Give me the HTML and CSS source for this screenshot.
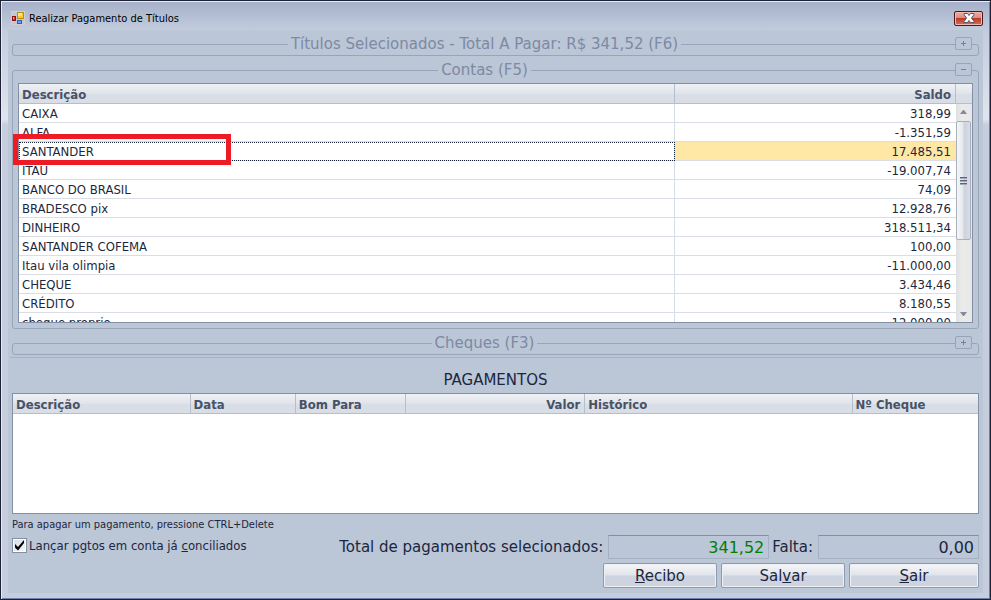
FILE: index.html
```html
<!DOCTYPE html>
<html lang="pt-BR">
<head>
    <meta charset="UTF-8">
    <meta name="viewport" content="width=device-width, initial-scale=1.0">
    <title>Realizar Pagamento de Títulos</title>
    <link rel="stylesheet" href="styles.css">
</head>
<body>
    <div class="window">
        <header class="title-bar">
            <svg class="app-icon" width="14" height="14" viewBox="0 0 14 14" aria-hidden="true">
                <rect x=".5" y=".5" width="13" height="13" fill="#c3c9d2" stroke="#cfd0cf"/>
                <rect x="6.5" y="1.5" width="6" height="6" fill="#ffc926" stroke="#c08a12"/>
                <rect x="7" y="2" width="4" height="3" fill="#ffe588"/>
                <rect x="1.5" y="5.5" width="3" height="4" fill="#d93a2b" stroke="#8c1209"/>
                <rect x="2" y="6" width="1" height="2" fill="#ff9c8c"/>
                <rect x="6.5" y="9.5" width="4" height="3" fill="#6f9df5" stroke="#2c5fc4"/>
            </svg>
            <h1>Realizar Pagamento de Títulos</h1>
            <button class="close" aria-label="Fechar">
                <svg width="12" height="10" viewBox="0 0 12 10">
                    <path d="M1 .5H4.5L6 2.5L7.5 .5H11V1.5L8.5 5L11 8.5V9.5H7.5L6 7.5L4.5 9.5H1V8.5L3.5 5L1 1.5Z" fill="#fff" stroke="#535666"/>
                </svg>
            </button>
        </header>

        <main class="client">
            <fieldset class="group">
                <legend>Títulos Selecionados - Total A Pagar: R$ 341,52 (F6)</legend>
                <button class="expander" aria-label="Expandir títulos"><svg width="5" height="5" viewBox="0 0 5 5"><path d="M0 2H5V3H0ZM2 0H3V5H2Z"/></svg></button>
            </fieldset>

            <fieldset class="group group-open">
                <legend>Contas (F5)</legend>
                <button class="expander" aria-label="Recolher contas"><svg width="5" height="5" viewBox="0 0 5 5"><path d="M0 2H5V3H0Z"/></svg></button>
                <div class="accounts-wrap">
                    <div class="accounts">
                        <table>
                            <colgroup><col class="col-account"><col></colgroup>
                            <thead>
                                <tr><th>Descrição</th><th class="num">Saldo</th></tr>
                            </thead>
                            <tbody>
                                <tr><td>CAIXA</td><td class="num">318,99</td></tr>
                                <tr><td>ALFA</td><td class="num">-1.351,59</td></tr>
                                <tr class="selected"><td>SANTANDER</td><td class="num">17.485,51</td></tr>
                                <tr><td>ITAU</td><td class="num">-19.007,74</td></tr>
                                <tr><td>BANCO DO BRASIL</td><td class="num">74,09</td></tr>
                                <tr><td>BRADESCO pix</td><td class="num">12.928,76</td></tr>
                                <tr><td>DINHEIRO</td><td class="num">318.511,34</td></tr>
                                <tr><td>SANTANDER COFEMA</td><td class="num">100,00</td></tr>
                                <tr><td>Itau vila olimpia</td><td class="num">-11.000,00</td></tr>
                                <tr><td>CHEQUE</td><td class="num">3.434,46</td></tr>
                                <tr><td>CRÉDITO</td><td class="num">8.180,55</td></tr>
                                <tr><td>cheque proprio</td><td class="num">12.000,00</td></tr>
                            </tbody>
                        </table>
                        <div class="scroll">
                            <div class="scroll-head"></div>
                            <div class="scroll-track">
                                <svg class="arrow" width="7" height="4" viewBox="0 0 7 4"><path d="M0 4L3 0H4L7 4Z"/></svg>
                                <div class="scroll-thumb"><i></i><i></i><i></i></div>
                                <svg class="arrow arrow-down" width="7" height="4" viewBox="0 0 7 4"><path d="M0 0H7L4 4H3Z"/></svg>
                            </div>
                        </div>
                    </div>
                    <div class="highlight"></div>
                </div>
            </fieldset>

            <fieldset class="group">
                <legend>Cheques (F3)</legend>
                <button class="expander" aria-label="Expandir cheques"><svg width="5" height="5" viewBox="0 0 5 5"><path d="M0 2H5V3H0ZM2 0H3V5H2Z"/></svg></button>
            </fieldset>

            <section class="payments">
                <h2>PAGAMENTOS</h2>
                <div class="payments-list">
                    <table>
                        <colgroup>
                            <col class="col-desc"><col class="col-date"><col class="col-due"><col class="col-value"><col class="col-history"><col>
                        </colgroup>
                        <thead>
                            <tr>
                                <th>Descrição</th>
                                <th>Data</th>
                                <th>Bom Para</th>
                                <th class="num">Valor</th>
                                <th>Histórico</th>
                                <th>Nº Cheque</th>
                            </tr>
                        </thead>
                    </table>
                </div>
                <p class="hint">Para apagar um pagamento, pressione CTRL+Delete</p>
            </section>

            <div class="totals">
                <label class="check">
                    <input type="checkbox" checked>
                    <svg width="15" height="15" viewBox="0 0 15 15"><path d="M3 6L6 9L12 2V5L6 12.500L3 9.500Z"/></svg>
                    <span>Lançar pgtos em conta já <u>c</u>onciliados</span>
                </label>
                <label class="total-label" for="total">Total de pagamentos selecionados:</label>
                <input class="total-field paid" id="total" type="text" value="341,52" readonly>
                <label class="total-label left-label" for="falta">Falta:</label>
                <input class="total-field" id="falta" type="text" value="0,00" readonly>
            </div>

            <div class="actions">
                <button class="btn"><u>R</u>ecibo</button>
                <button class="btn btn-save">Sal<u>v</u>ar</button>
                <button class="btn btn-exit"><u>S</u>air</button>
            </div>
        </main>
    </div>
</body>
</html>
```
FILE: styles.css
```css
* {
    box-sizing: border-box;
}

body {
    margin: 0;
    font-family: "DejaVu Sans Condensed", "DejaVu Sans", Tahoma, sans-serif;
    font-size: 13px;
    color: #1b2740;
}

h1, h2, p {
    margin: 0;
    font-weight: normal;
}

button, input {
    font: inherit;
    color: inherit;
}

.window {
    min-height: 100vh;
    display: flex;
    flex-direction: column;
    padding: 1px 6px 6px;
    border: 1px solid #1d2236;
    background: linear-gradient(#a5b0c9, #c3cddd 30px, #e0e4ee 118px, #c6cddc 124px);
    box-shadow: inset 1px 1px 0 #e6eaf2, inset -1px -1px 0 #6683b0;
}

.title-bar {
    height: 28px;
    display: flex;
    align-items: center;
    gap: 4px;
    padding: 4px 1px 0 4px;
}

.title-bar h1 {
    flex: 1;
    font-size: 11px;
    color: #000;
}

.close {
    width: 29px;
    height: 15px;
    display: flex;
    align-items: center;
    justify-content: center;
    padding: 0;
    border: 1px solid #4a1a22;
    border-radius: 2px;
    background: linear-gradient(#eeb0a5, #dd8a7d 45%, #b93d2a 50%, #d0715f);
    box-shadow: inset 0 0 0 1px #f0b8ae;
}

.client {
    flex: 1;
    display: flex;
    flex-direction: column;
    margin: 0 1px;
    padding: 5px 4px;
    background: #bbc6d7;
}

/* right padding keeps the legend clear of the expander */
.group {
    position: relative;
    min-width: 0;
    height: 21px;
    margin: 0 0 5px;
    padding: 0 27px 0 5px;
    border: 1px solid #98a4b7;
    border-radius: 3px;
}

.group-open {
    height: auto;
    padding-top: 4px;
    padding-bottom: 5px;
}

.group legend {
    height: 18px;
    margin: 0 auto;
    padding: 0 3px;
    font-family: "DejaVu Sans", Verdana, sans-serif;
    font-size: 15px;
    line-height: 18px;
    color: #7d8aa3;
}

.expander {
    position: absolute;
    top: -16px;
    right: 6px;
    width: 17px;
    height: 13px;
    display: flex;
    align-items: center;
    justify-content: center;
    padding: 0;
    border: 1px solid #98a4b7;
    border-radius: 2px;
    background: #bbc6d7;
}

.expander svg {
    fill: #74819a;
}

table {
    width: 100%;
    table-layout: fixed;
    border-collapse: separate;
    border-spacing: 0;
}

th {
    height: 20px;
    padding: 2px 4px 0 3px;
    border-right: 1px solid #b4bfce;
    border-bottom: 1px solid #b4bfce;
    background: linear-gradient(#eef1f4, #e0e4ea 50%, #d9dde6 52%);
    text-align: left;
    line-height: 17px;
    color: #475267;
}

td {
    height: 19px;
    padding: 2px 5px 0 3px;
    border-bottom: 1px solid #d9dde8;
    line-height: 16px;
}

.num {
    text-align: right;
}

.accounts-wrap {
    position: relative;
    margin-right: -22px;
}

.accounts {
    height: 240px;
    display: flex;
    align-items: flex-start;
    overflow: hidden;
    border: 1px solid #8390a4;
    background: #fff;
}

.accounts table {
    flex: 1;
}

.accounts td:first-child {
    border-right: 1px solid #d5dbe6;
}

.col-account {
    width: 70%;
}

.selected .num {
    background: #ffe8a6;
}

.selected td:first-child {
    outline: 1px dotted #1b2740;
    outline-offset: -1px;
}

.highlight {
    position: absolute;
    top: 51px;
    left: -5px;
    width: 218px;
    height: 31px;
    border: 5px solid #ed1c24;
}

.scroll {
    width: 16px;
    align-self: stretch;
    display: flex;
    flex-direction: column;
}

.scroll-head {
    height: 20px;
    border-bottom: 1px solid #b4bfce;
    background: linear-gradient(#eef1f4, #e0e4ea 50%, #d9dde6 52%);
}

.scroll-track {
    flex: 1;
    display: flex;
    flex-direction: column;
    align-items: center;
    padding: 6px 1px 6px 0;
    background: linear-gradient(90deg, #dfe0e1, #ebebec 40%, #e6e7e8);
}

.arrow {
    flex: none;
    fill: #85899a;
}

.arrow-down {
    margin-top: auto;
}

.scroll-thumb {
    width: 15px;
    height: 119px;
    display: flex;
    flex-direction: column;
    align-items: center;
    justify-content: center;
    gap: 1px;
    margin-top: 7px;
    border: 1px solid #a9afb9;
    border-radius: 2px;
    background: linear-gradient(90deg, #f6f7f9, #e4e7ed 45%, #cdd3de 55%, #d7dce5);
}

.scroll-thumb i {
    width: 7px;
    height: 2px;
    border-top: 1px solid #5e677a;
    background: #a3abbb;
}

.payments {
    flex: 1;
    display: flex;
    flex-direction: column;
    margin: -3px -2px 0;
    padding: 0 2px;
    border-top: 1px solid #a4b0c3;
}

.payments h2 {
    height: 35px;
    padding-top: 12px;
    font-family: "DejaVu Sans", Verdana, sans-serif;
    font-size: 15px;
    line-height: 21px;
    text-align: center;
}

.payments-list {
    flex: 1;
    min-height: 100px;
    border: 1px solid #8390a4;
    background: #fff;
}

.payments-list th:last-child {
    border-right: 0;
}

.col-desc {
    width: 18.4%;
}

.col-date {
    width: 10.9%;
}

.col-due {
    width: 11.4%;
}

.col-value {
    width: 18.6%;
}

.col-history {
    width: 27.7%;
}

.hint {
    height: 21px;
    font-size: 11px;
    line-height: 22px;
}

.totals {
    display: flex;
    align-items: center;
}

.check {
    position: relative;
    display: flex;
    align-items: center;
    gap: 2px;
    margin-right: auto;
    padding-bottom: 4px;
}

.check input {
    appearance: none;
    width: 15px;
    height: 15px;
    margin: 0;
    border: 1px solid #8390a4;
    background: linear-gradient(135deg, #d5d9e1, #f6f7f9);
    box-shadow: inset 0 0 0 1px #fff;
}

.check svg {
    position: absolute;
    top: 0;
    left: 0;
    visibility: hidden;
    pointer-events: none;
}

.check input:checked + svg {
    visibility: visible;
}

.total-label {
    margin-right: 5px;
    font-family: "DejaVu Sans", Verdana, sans-serif;
    font-size: 15px;
}

.left-label {
    margin-left: 3px;
}

.total-field {
    width: 161px;
    height: 24px;
    padding: 0 4px;
    border: 1px solid #a4b0c3;
    border-top-color: #8390a4;
    background: transparent;
    font-family: "DejaVu Sans", Verdana, sans-serif;
    font-size: 16px;
    text-align: right;
}

.paid {
    color: #008000;
}

.actions {
    display: flex;
    justify-content: flex-end;
    gap: 4px;
    margin-top: 4px;
}

.btn {
    width: 114px;
    height: 25px;
    padding: 0;
    border: 1px solid #8d9aae;
    border-radius: 2px;
    background: linear-gradient(#f5f6f8, #e0e4ea 48%, #ced4df 52%, #cdd3df);
    box-shadow: inset 0 0 0 1px #eef0f4;
    font-family: "DejaVu Sans", Verdana, sans-serif;
    font-size: 15px;
}

.btn-save {
    width: 124px;
}

.btn-exit {
    width: 130px;
}
```
